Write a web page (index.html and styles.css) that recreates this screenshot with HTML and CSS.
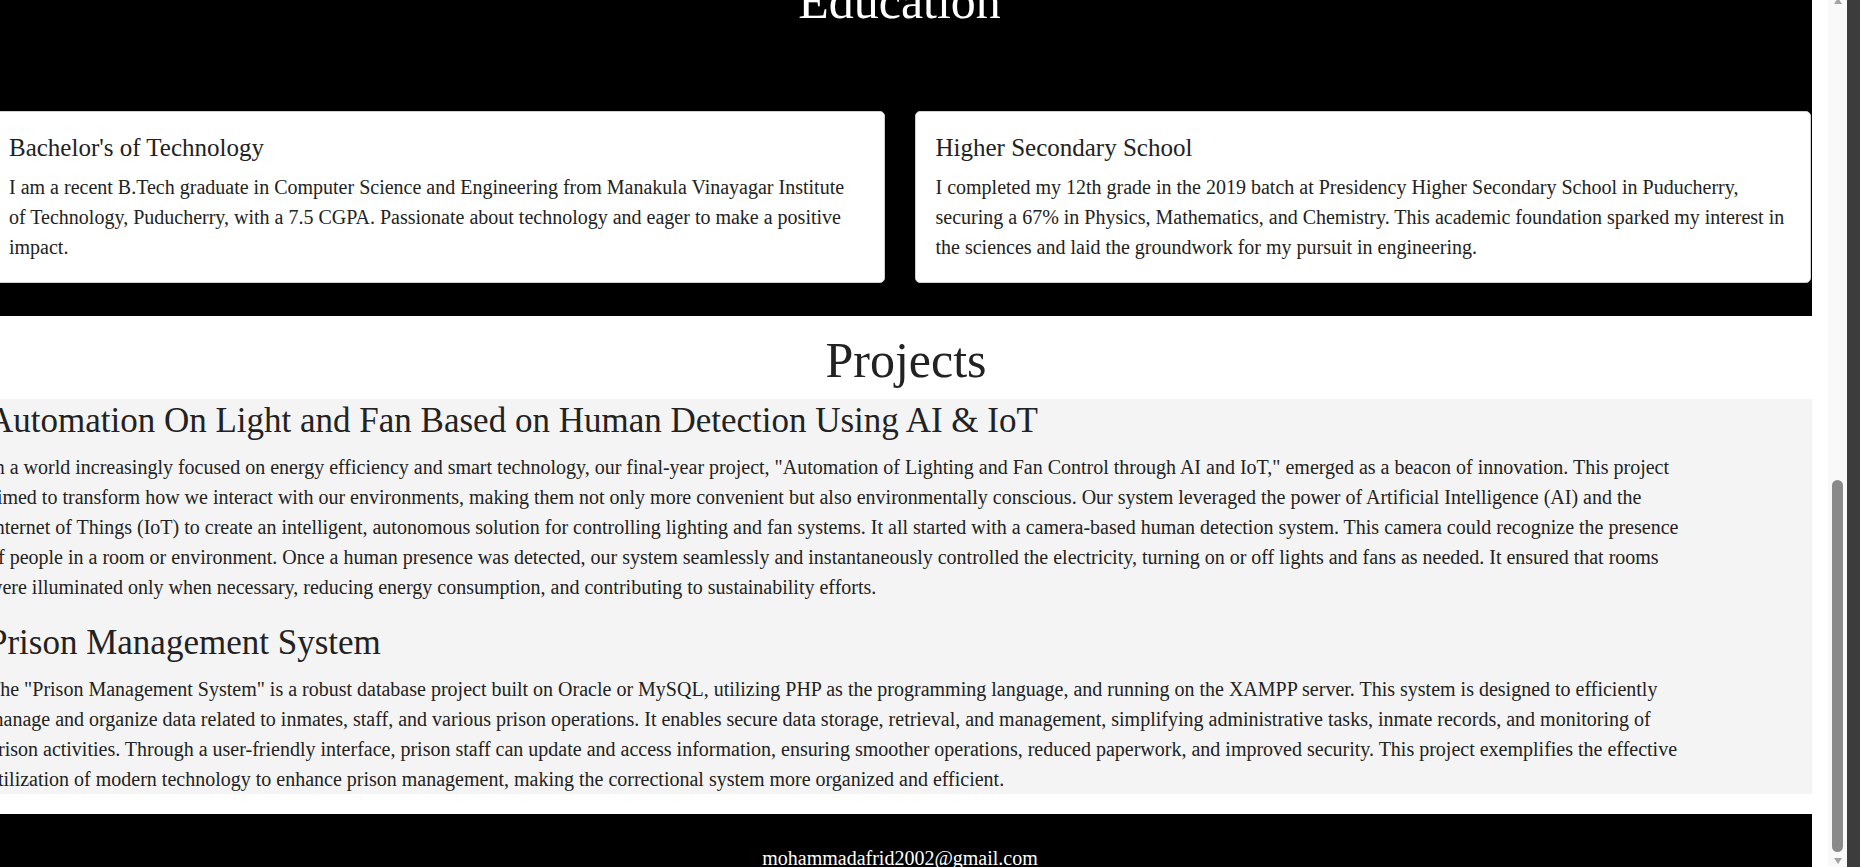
FILE: index.html
```html
<!DOCTYPE html>
<html lang="en">
<head>
<meta charset="utf-8">
<title>Portfolio</title>
<link rel="stylesheet" href="styles.css">
</head>
<body>
<div class="page">
  <section class="edu">
    <div class="edu-inner">
      <h2 class="edu-title">Education</h2>
      <div class="edu-cards">
        <div class="card">
          <h3 class="card-title">Bachelor's of Technology</h3>
          <p class="card-text">I am a recent B.Tech graduate in Computer Science and Engineering from Manakula Vinayagar Institute of Technology, Puducherry, with a 7.5 CGPA. Passionate about technology and eager to make a positive impact.</p>
        </div>
        <div class="card">
          <h3 class="card-title">Higher Secondary School</h3>
          <p class="card-text">I completed my 12th grade in the 2019 batch at Presidency Higher Secondary School in Puducherry, securing a 67% in Physics, Mathematics, and Chemistry. This academic foundation sparked my interest in the sciences and laid the groundwork for my pursuit in engineering.</p>
        </div>
      </div>
    </div>
  </section>

  <h2 class="proj-heading">Projects</h2>
  <section class="projects">
    <div class="projects-inner">
      <div class="project">
        <h3 class="project-title">Automation On Light and Fan Based on Human Detection Using AI &amp; IoT</h3>
        <p class="project-text">In a world increasingly focused on energy efficiency and smart technology, our final-year project, "Automation of Lighting and Fan Control through AI and IoT," emerged as a beacon of innovation. This project aimed to transform how we interact with our environments, making them not only more convenient but also environmentally conscious. Our system leveraged the power of Artificial Intelligence (AI) and the Internet of Things (IoT) to create an intelligent, autonomous solution for controlling lighting and fan systems. It all started with a camera-based human detection system. This camera could recognize the presence of people in a room or environment. Once a human presence was detected, our system seamlessly and instantaneously controlled the electricity, turning on or off lights and fans as needed. It ensured that rooms were illuminated only when necessary, reducing energy consumption, and contributing to sustainability efforts.</p>
      </div>
      <div class="project">
        <h3 class="project-title">Prison Management System</h3>
        <p class="project-text">The "Prison Management System" is a robust database project built on Oracle or MySQL, utilizing PHP as the programming language, and running on the XAMPP server. This system is designed to efficiently manage and organize data related to inmates, staff, and various prison operations. It enables secure data storage, retrieval, and management, simplifying administrative tasks, inmate records, and monitoring of prison activities. Through a user-friendly interface, prison staff can update and access information, ensuring smoother operations, reduced paperwork, and improved security. This project exemplifies the effective utilization of modern technology to enhance prison management, making the correctional system more organized and efficient.</p>
      </div>
    </div>
  </section>

  <footer class="footer">
    <p class="footer-mail">mohammadafrid2002@gmail.com</p>
  </footer>
</div>
<div class="gutter"></div>
<div class="scrollbar">
  <div class="sb-arrow sb-up"></div>
  <div class="sb-thumb"></div>
  <div class="sb-arrow sb-down"></div>
</div>
<div class="edge"></div>
</body>
</html>
```

FILE: styles.css
```css
html, body {
  margin: 0;
  padding: 0;
}

body {
  display: flex;
  width: 1860px;
  height: 867px;
  overflow: hidden;
  background: #ffffff;
  font-family: "Liberation Serif", "Times New Roman", serif;
  color: #222222;
}

.page {
  flex: none;
  width: 1812px;
  height: 867px;
  overflow: hidden;
}

/* Education */
.edu {
  background: #000000;
  padding-bottom: 33px;
}

.edu-inner {
  width: 1823px;
  margin-left: -12px;
}

.edu-title {
  margin: -24px 0 85px;
  font-size: 50px;
  line-height: 1;
  font-weight: normal;
  text-align: center;
  color: #ffffff;
}

.edu-cards {
  display: flex;
  gap: 30px;
}

.card {
  flex: 1 1 0;
  background: #ffffff;
  border: 1px solid #cfcfcf;
  border-radius: 5px;
  padding: 20px 20px;
}

.card-title {
  margin: 2px 0 9px;
  font-size: 25px;
  line-height: 1.15;
  font-weight: normal;
}

.card-text {
  margin: 0;
  font-size: 20px;
  line-height: 30px;
}

/* Projects */
.proj-heading {
  margin: 19px 0 14px;
  font-size: 50px;
  line-height: 1;
  font-weight: normal;
  text-align: center;
}

.projects {
  background: #f4f4f4;
  padding-top: 2px;
  margin-bottom: 20px;
}

.projects-inner {
  width: 1700px;
  margin-left: -12px;
}

.project + .project {
  margin-top: 21px;
}

.project-title {
  margin: 0 0 11px;
  font-size: 35px;
  line-height: 1.15;
  font-weight: normal;
}

.project-text {
  margin: 0;
  font-size: 20px;
  line-height: 30px;
}

/* Footer */
.footer {
  background: #000000;
  padding-top: 33px;
  height: 80px;
}

.footer-mail {
  margin: 0 0 0 -12px;
  font-size: 20px;
  text-align: center;
  color: #ffffff;
}

/* Browser scrollbar */
.gutter {
  flex: none;
  width: 16px;
  background: #ffffff;
}

.scrollbar {
  flex: none;
  width: 19px;
  background: #f9f9f9;
  display: flex;
  flex-direction: column;
  align-items: center;
}

.sb-arrow {
  width: 0;
  height: 0;
  border-left: 4px solid transparent;
  border-right: 4px solid transparent;
}

.sb-up {
  margin-top: -2px;
  border-bottom: 6px solid #a3a3a3;
}

.sb-thumb {
  margin-top: 476px;
  width: 11px;
  height: 372px;
  border-radius: 6px;
  background: #8a8a8a;
}

.sb-down {
  margin-top: 6px;
  border-top: 6px solid #a3a3a3;
}

.edge {
  flex: none;
  width: 13px;
  background: #3c3c3c;
}
```
